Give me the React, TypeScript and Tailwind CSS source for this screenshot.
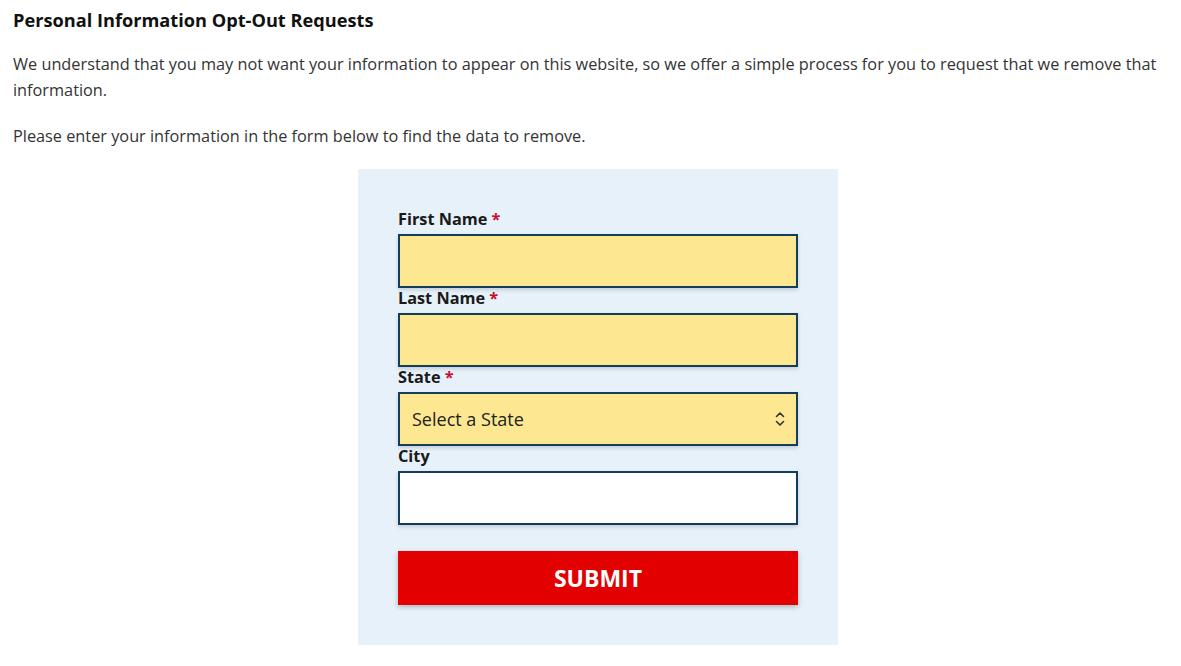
import React from "react";

function Label({ text, required }: { text: string; required?: boolean }) {
  return (
    <label className="block h-[25px] text-[16.3px] leading-[20px] font-bold text-[#1a1a1a]">
      {text}
      {required && <span className="text-[#c8102e]"> *</span>}
    </label>
  );
}

export default function App() {
  return (
    <div
      className="bg-white text-[#333] px-[13px] pt-[8px] min-h-[666px]"
      style={{ fontFamily: '"Open Sans", "Noto Sans", sans-serif' }}
    >
      <h1 className="text-[18.2px] leading-[24px] font-bold text-[#111]">
        Personal Information Opt-Out Requests
      </h1>
      <p className="mt-[19px] text-[16.3px] leading-[26px]">
        We understand that you may not want your information to appear on this website, so we offer a simple process for you to request that we remove that information.
      </p>
      <p className="mt-[20px] text-[16.3px] leading-[26px]">
        Please enter your information in the form below to find the data to remove.
      </p>
      <div className="mt-[20px] ml-[345px] w-[480px] bg-[#e7f1fa] p-[40px]">
        <Label text="First Name" required />
        <input className="block w-[400px] h-[54px] bg-[#fde891] border-2 border-[#123d5c] shadow-[0_2px_4px_rgba(0,0,0,0.15)] outline-none" />
        <Label text="Last Name" required />
        <input className="block w-[400px] h-[54px] bg-[#fde891] border-2 border-[#123d5c] shadow-[0_2px_4px_rgba(0,0,0,0.15)] outline-none" />
        <Label text="State" required />
        <div className="relative w-[400px] h-[54px] bg-[#fde891] border-2 border-[#123d5c] shadow-[0_2px_4px_rgba(0,0,0,0.15)] flex items-center pl-[12px]">
          <span className="text-[18px] text-[#222]">Select a State</span>
          <svg className="absolute right-[11px] top-1/2 -translate-y-1/2" width="10" height="20" viewBox="0 0 10 20" fill="none" stroke="#333" strokeWidth="1.6" strokeLinecap="round" strokeLinejoin="round">
            <path d="M1.5 7.5 L5 4 L8.5 7.5" />
            <path d="M1.5 12.5 L5 16 L8.5 12.5" />
          </svg>
        </div>
        <Label text="City" />
        <input className="block w-[400px] h-[54px] bg-white border-2 border-[#123d5c] shadow-[0_2px_4px_rgba(0,0,0,0.15)] outline-none" />
        <button className="block mt-[26px] w-[400px] h-[54px] bg-[#e30000] text-white text-[23px] font-bold shadow-[0_2px_5px_rgba(0,0,0,0.25)]">
          SUBMIT
        </button>
      </div>
    </div>
  );
}
